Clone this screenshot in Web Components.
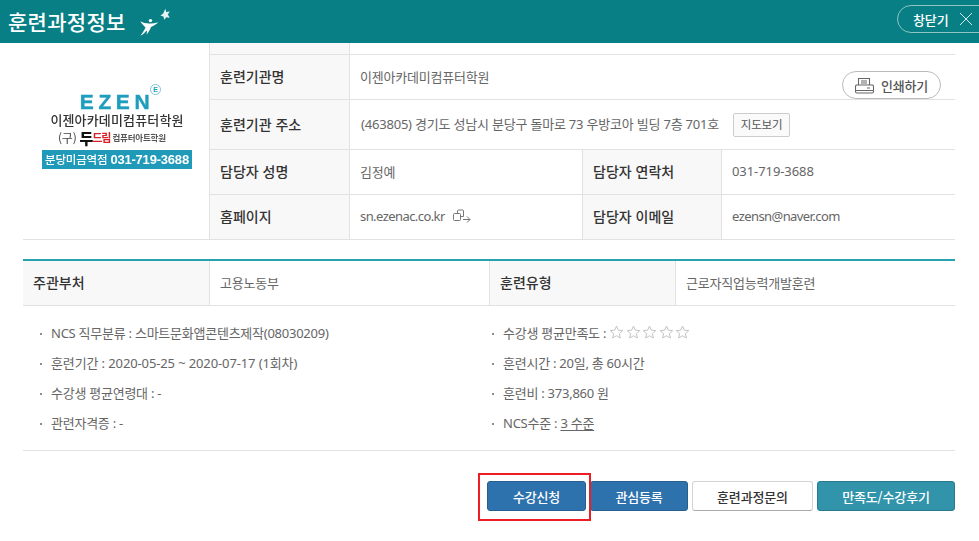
<!DOCTYPE html>
<html lang="ko">
<head>
<meta charset="utf-8">
<title>훈련과정정보</title>
<style>
  html, body { margin: 0; background: #fff; }
  body { width: 979px; height: 541px; overflow: hidden; font-family: "Noto Sans", "Noto Sans CJK KR", sans-serif; color: #555; }
</style>
</head>
<body>
<course-header></course-header>
<org-table></org-table>
<summary-table></summary-table>
<info-list></info-list>
<action-bar></action-bar>

<script>
// 상단 헤더
class CourseHeader extends HTMLElement {
  constructor() {
    super();
    this.attachShadow({ mode: 'open' }).innerHTML = `
      <style>
        :host { display: flex; align-items: center; justify-content: space-between; height: 43px; background: #087f84; color: #fff; overflow: hidden; }
        .left { display: flex; align-items: center; padding-left: 8px; }
        h1 { margin: 0; font-size: 21px; line-height: 40px; font-weight: 500; letter-spacing: .3px; }
        svg.mark { margin-left: 13px; }
        .close { display: flex; align-items: center; gap: 10px; box-sizing: border-box; width: 100px; height: 28px; margin: 0 -18px 5px 0; padding-left: 15px; border: 1px solid #8fc4c5; border-radius: 14px; font-size: 13px; font-weight: 500; letter-spacing: -.1px; }
      </style>
      <div class="left">
        <h1>훈련과정정보</h1>
        <svg class="mark" width="32" height="30" viewBox="0 0 32 30">
          <path d="M26.300 1.800l.9 3.100 3.600-.3-2 3 2 3.200-3.500-.6-2 2.500-.9-3.300-3-.9 2.800-2z" fill="#e6f2f2"/>
          <circle cx="11.500" cy="13.600" r="1.700" fill="#fff"/>
          <path d="M1.300 14.300C4 16 7 16.500 10 16.500c3.500 0 6.500-.5 9.300-1-2.800 2.500-5.300 3.500-7.300 4.500-.5 2-2 4-4.300 7.700.3-2.700.3-3.700-.2-4.200-1.500 2-3.500 4-6.200 5.200 2.200-2.700 4.200-5.700 5.200-8.200-1.500-1.500-3.500-3.500-5.200-6.200z" fill="#fff"/>
        </svg>
      </div>
      <div class="close">창닫기
        <svg width="14" height="14" viewBox="0 0 14 14"><path d="M1 1l12 12M13 1L1 13" stroke="#d5e9e9" stroke-width="1" fill="none"/></svg>
      </div>`;
  }
}

// 학원 로고
class EzenLogo extends HTMLElement {
  constructor() {
    super();
    this.attachShadow({ mode: 'open' }).innerHTML = `
      <style>
        :host { display: flex; flex-direction: column; align-items: center; filter: blur(.3px); font-family: "Noto Sans CJK KR", sans-serif; }
        .brand { position: relative; font: 700 21px/22px "Liberation Sans", sans-serif; letter-spacing: 4.600px; color: #1f9dbd; height: 22px; -webkit-text-stroke: .4px #1f9dbd; }
        .e { position: absolute; right: -7px; top: -7px; width: 9px; height: 9px; border: 1px solid #7cc4d8; border-radius: 50%; font: 700 7px/9px "Liberation Sans", sans-serif; letter-spacing: 0; text-align: center; -webkit-text-stroke: 0; }
        .name { font-size: 13px; line-height: 16px; font-weight: 500; color: #333; letter-spacing: .15px; margin-top: -1px; }
        .old { display: flex; align-items: center; font-size: 12px; line-height: 17px; color: #444; margin-top: 1px; width: 108px; margin-right: 10px; white-space: nowrap; }
        .old b { font-size: 15px; line-height: 14px; color: #111; margin-left: 3px; font-weight: 900; }
        .old i { font-style: normal; font-weight: 700; font-size: 11px; color: #d81f26; letter-spacing: -1px; margin-left: -1px; }
        .old span { font-size: 8.500px; font-weight: 700; color: #555; margin-left: 2px; letter-spacing: -.2px; }
        .tel { box-sizing: border-box; width: 150px; height: 19px; margin-top: 4px; background: #1f9ab8; color: #fff; font-size: 11.500px; font-weight: 500; line-height: 19px; text-align: center; white-space: nowrap; }
        .tel span { font: 700 13px "Liberation Sans", sans-serif; }
      </style>
      <div class="brand">EZEN<span class="e">E</span></div>
      <div class="name">이젠아카데미컴퓨터학원</div>
      <div class="old">(구)<b>두</b><i>드림</i><span>컴퓨터아트학원</span></div>
      <div class="tel">분당미금역점 <span>031-719-3688</span></div>`;
  }
}

// 훈련기관 정보 표
class OrgTable extends HTMLElement {
  constructor() {
    super();
    this.attachShadow({ mode: 'open' }).innerHTML = `
      <style>
        :host { display: grid; position: relative; width: 932px; margin-left: 23px; grid-template-columns: 187px 140px 233px 139px 233px; grid-template-rows: 12px 45px 50px 45px 44px; font-size: 13px; letter-spacing: -.2px; color: #666; border-bottom: 1px solid #e2e2e2; box-sizing: border-box; height: 197px; }
        .logo { grid-row: 1 / 6; grid-column: 1; display: flex; align-items: flex-start; justify-content: center; padding: 48px 0 0 2px; border-right: 1px solid #e2e2e2; box-sizing: border-box; }
        .th, .td { display: flex; align-items: center; box-sizing: border-box; border-bottom: 1px solid #e2e2e2; padding: 0 0 2px 10px; white-space: nowrap; }
        .th { background: #f8f8f8; color: #333; font-size: 14px; font-weight: 500; letter-spacing: 0; border-right: 1px solid #e2e2e2; font-family: "Noto Sans CJK KR", sans-serif; }
        .td { border-right: 1px solid #e2e2e2; }
        .span { grid-column: 3 / 6; border-right: 0; }
        .addr { padding-left: 11px; }
        .end { border-right: 0; }
        .last { border-bottom: 0; }
        .tel { letter-spacing: -.08px; }
        .latin { letter-spacing: -.57px; }
        .map { display: inline-block; margin: 2px 0 0 14px; padding: 0; width: 57px; text-align: center; height: 24px; line-height: 22px; box-sizing: border-box; border: 1px solid #ccc; border-radius: 2px; background: #fafafa; font-size: 11.500px; color: #555; }
        .ext { margin-left: 8px; }
        .print { position: absolute; right: 14px; top: 28px; display: flex; align-items: center; gap: 7px; box-sizing: border-box; width: 99px; height: 28px; padding: 0 0 0 12px; border: 1px solid #bbb; border-radius: 14px; background: #fff; font-size: 13px; font-weight: 500; letter-spacing: -.2px; color: #555; font-family: "Noto Sans CJK KR", sans-serif; }
        .top { grid-column: 2; }
        .top2 { grid-column: 3 / 6; }
      </style>
      <div class="logo"><ezen-logo></ezen-logo></div>
      <div class="th top"></div><div class="td top2 end"></div>
      <div class="th">훈련기관명</div><div class="td span">이젠아카데미컴퓨터학원</div>
      <div class="th">훈련기관 주소</div><div class="td span addr">(463805) 경기도 성남시 분당구 돌마로 73 우방코아 빌딩 7층 701호<span class="map">지도보기</span></div>
      <div class="th">담당자 성명</div><div class="td">김정예</div><div class="th">담당자 연락처</div><div class="td end tel">031-719-3688</div>
      <div class="th last">홈페이지</div><div class="td last latin">sn.ezenac.co.kr
        <svg class="ext" width="18" height="14" viewBox="0 0 18 14" fill="none" stroke="#777" stroke-width="1"><rect x=".5" y="4.500" width="7" height="7" rx="1"/><path d="M4.500 4.500V2a1 1 0 011-1h4a1 1 0 011 1v5.500H8M10 10.500h7M14 7.500l3 3-3 3"/></svg>
      </div><div class="th last">담당자 이메일</div><div class="td end last latin">ezensn@naver.com</div>
      <div class="print">
        <svg width="19" height="17" viewBox="0 0 19 17" fill="none" stroke="#666" stroke-width="1.100"><path d="M3.500 8V1.500h11V8M6 4h6M6 6h6"/><rect x=".5" y="8" width="18" height="8" rx="1.500"/><path d="M.5 13.500h18M12 11h3" /></svg>
        인쇄하기
      </div>`;
  }
}

// 주관부처 / 훈련유형
class SummaryTable extends HTMLElement {
  constructor() {
    super();
    this.attachShadow({ mode: 'open' }).innerHTML = `
      <style>
        :host { display: grid; width: 932px; margin: 19px 0 0 23px; grid-template-columns: 187px 280px 186px 279px; height: 47px; box-sizing: border-box; border-top: 2px solid #27a3ad; border-bottom: 1px solid #e2e2e2; font-size: 13px; letter-spacing: -.2px; color: #666; }
        div { display: flex; align-items: center; box-sizing: border-box; padding: 0 0 2px 10px; }
        .th { background: #f8f8f8; color: #333; font-size: 14px; font-weight: 500; letter-spacing: 0; border-right: 1px solid #e2e2e2; font-family: "Noto Sans CJK KR", sans-serif; }
        .td { border-right: 1px solid #e2e2e2; }
        .end { border-right: 0; }
      </style>
      <div class="th">주관부처</div><div class="td">고용노동부</div>
      <div class="th">훈련유형</div><div class="td end">근로자직업능력개발훈련</div>`;
  }
}

// 과정 세부 항목
class InfoItem extends HTMLElement {
  constructor() {
    super();
    this.attachShadow({ mode: 'open' }).innerHTML = `
      <style>
        :host { display: flex; align-items: center; height: 30px; padding-bottom: 2px; box-sizing: border-box; font-size: 13px; letter-spacing: -.25px; color: #666; white-space: nowrap; }
        :host::before { content: ""; width: 2px; height: 2px; margin: 4px 9px 0 0; background: #666; border-radius: 50%; }
      </style>
      <slot></slot>`;
  }
}

class InfoList extends HTMLElement {
  constructor() {
    super();
    const stars = Array.from({ length: 5 }, () =>
      '<svg width="15" height="14" viewBox="0 0 15 14" style="margin-right:1.500px"><path d="M7.500 1l1.800 4.200 4.500.4-3.400 3 1 4.400-3.900-2.300-3.900 2.300 1-4.400-3.400-3 4.500-.4z" fill="none" stroke="#c4c4c4"/></svg>').join('');
    this.attachShadow({ mode: 'open' }).innerHTML = `
      <style>
        :host { display: grid; width: 932px; margin-left: 23px; box-sizing: border-box; padding: 12px 0 12px 17px; grid-template-columns: 452px 1fr; border-bottom: 1px solid #e2e2e2; }
        u { text-underline-offset: 2px; }
        .stars { display: inline-flex; margin-left: 3px; }
        .date { letter-spacing: -.12px; }
      </style>
      <info-item>NCS 직무분류 : 스마트문화앱콘텐츠제작(08030209)</info-item>
      <info-item>수강생 평균만족도 :<span class="stars">${stars}</span></info-item>
      <info-item><span class="date">훈련기간 : 2020-05-25 ~ 2020-07-17 (1회차)</span></info-item>
      <info-item>훈련시간 : 20일, 총 60시간</info-item>
      <info-item>수강생 평균연령대 : -</info-item>
      <info-item>훈련비 : 373,860 원</info-item>
      <info-item>관련자격증 : -</info-item>
      <info-item>NCS수준 :&nbsp;<u>3 수준</u></info-item>`;
  }
}

// 하단 버튼
class ActionBar extends HTMLElement {
  constructor() {
    super();
    this.attachShadow({ mode: 'open' }).innerHTML = `
      <style>
        :host { display: flex; justify-content: flex-end; position: relative; width: 932px; margin: 30px 0 0 23px; }
        button { box-sizing: border-box; height: 30px; padding: 0; border-radius: 3px; border: 1px solid #25608f; background: #2e72ad; color: #fff; font: 500 13px "Noto Sans CJK KR", sans-serif; letter-spacing: -.15px; }
        .apply { width: 99px; }
        .fav { width: 98px; margin-left: 4px; }
        .ask { width: 121px; margin-left: 4px; background: #fff; color: #333; border-color: #d4d4d4; border-bottom-color: #aaa; }
        .review { width: 138px; margin-left: 4px; background: #3194ab; border-color: #27798c; }
        .mark { position: absolute; left: 455px; top: -8px; width: 113px; height: 48px; box-sizing: border-box; border: 2px solid #ee1c25; pointer-events: none; }
      </style>
      <button class="apply">수강신청</button>
      <button class="fav">관심등록</button>
      <button class="ask">훈련과정문의</button>
      <button class="review">만족도/수강후기</button>
      <span class="mark"></span>`;
  }
}

customElements.define('course-header', CourseHeader);
customElements.define('ezen-logo', EzenLogo);
customElements.define('org-table', OrgTable);
customElements.define('summary-table', SummaryTable);
customElements.define('info-item', InfoItem);
customElements.define('info-list', InfoList);
customElements.define('action-bar', ActionBar);
</script>
</body>
</html>
